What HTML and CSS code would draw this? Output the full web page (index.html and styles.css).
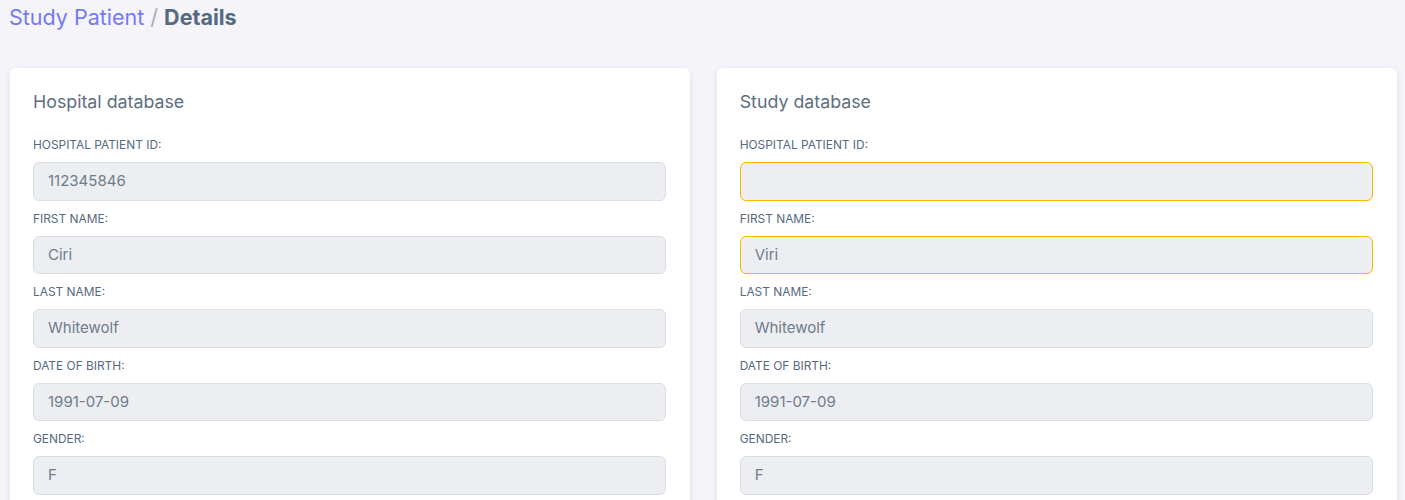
FILE: index.html
```html
<!DOCTYPE html>
<html>
<head>
<meta charset="utf-8">
<link rel="stylesheet" href="styles.css">
</head>
<body>
<div class="page">
  <div class="breadcrumb"><span class="crumb-link">Study Patient</span> <span class="sep">/</span> <span class="crumb-current">Details</span></div>
  <div class="cards">
    <div class="card">
      <h5 class="card-title">Hospital database</h5>
      <div class="field"><label>Hospital patient ID:</label><div class="input">112345846</div></div>
      <div class="field"><label>First name:</label><div class="input">Ciri</div></div>
      <div class="field"><label>Last name:</label><div class="input">Whitewolf</div></div>
      <div class="field"><label>Date of birth:</label><div class="input">1991-07-09</div></div>
      <div class="field"><label>Gender:</label><div class="input">F</div></div>
    </div>
    <div class="card">
      <h5 class="card-title">Study database</h5>
      <div class="field"><label>Hospital patient ID:</label><div class="input warn"></div></div>
      <div class="field"><label>First name:</label><div class="input warn">Viri</div></div>
      <div class="field"><label>Last name:</label><div class="input">Whitewolf</div></div>
      <div class="field"><label>Date of birth:</label><div class="input">1991-07-09</div></div>
      <div class="field"><label>Gender:</label><div class="input">F</div></div>
    </div>
  </div>
</div>
</body>
</html>
```
FILE: styles.css
```css
html, body {
  margin: 0;
  padding: 0;
  background: #f4f4f9;
  font-family: Inter, "Noto Sans", sans-serif;
  overflow: hidden;
}
.page {
  padding: 3px 8px 0 10px;
}
.breadcrumb {
  font-size: 21.5px;
  line-height: 28px;
  margin-left: -1px;
}
.crumb-link { color: #7479f5; }
.sep { color: #a5aebb; }
.crumb-current { color: #566a7f; font-weight: 700; }
.cards {
  display: grid;
  grid-template-columns: 679.5px 680px;
  column-gap: 27.2px;
  margin-top: 37px;
}
.card {
  background: #fff;
  border-radius: 6px;
  box-shadow: 0 2px 6px rgba(67, 89, 113, 0.12);
  padding: 22px 24px 20px 23px;
}
.card-title {
  margin: 0 0 22px 0;
  font-size: 17.8px;
  line-height: 24px;
  font-weight: 400;
  color: #5d6e82;
}
.field label {
  display: block;
  text-transform: uppercase;
  font-size: 11.9px;
  line-height: 16px;
  color: #566a7f;
  padding-top: 1px;
  margin-bottom: 9px;
}
.field {
  margin-bottom: 9px;
}
.input {
  box-sizing: border-box;
  height: 38.5px;
  background: #eceef1;
  border: 1px solid #d9dee3;
  border-radius: 6px;
  padding: 0 14px;
  font-size: 15px;
  line-height: 36px;
  color: #6f7c8c;
}
.input.warn {
  border-color: #ffb400;
}
```
